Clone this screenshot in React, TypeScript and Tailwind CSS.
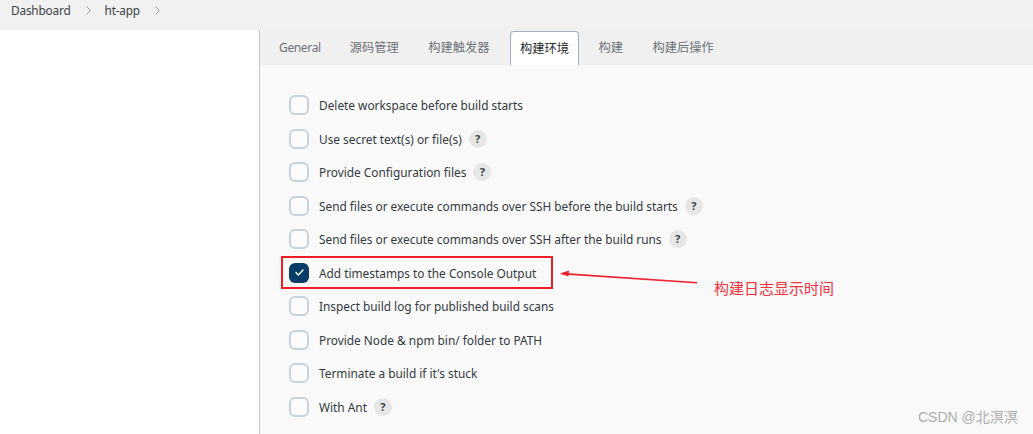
const font = { fontFamily: '"Noto Sans", "Noto Sans CJK SC", sans-serif' };

const rows: { label: string; help?: boolean; checked?: boolean }[] = [
  { label: "Delete workspace before build starts" },
  { label: "Use secret text(s) or file(s)", help: true },
  { label: "Provide Configuration files", help: true },
  { label: "Send files or execute commands over SSH before the build starts", help: true },
  { label: "Send files or execute commands over SSH after the build runs", help: true },
  { label: "Add timestamps to the Console Output", checked: true },
  { label: "Inspect build log for published build scans" },
  { label: "Provide Node & npm bin/ folder to PATH" },
  { label: "Terminate a build if it's stuck" },
  { label: "With Ant", help: true },
];

const tabs = ["General", "源码管理", "构建触发器", "构建环境", "构建", "构建后操作"];

function Chevron() {
  return (
    <svg width="5" height="9" viewBox="0 0 5 9" fill="none" stroke="#a0a0a0" strokeWidth="1" className="block">
      <path d="M0.5 0.5 L4.5 4.5 L0.5 8.5" />
    </svg>
  );
}

export default function App() {
  return (
    <div className="relative w-[1033px] h-[434px] overflow-hidden bg-[#f9f9f9] text-[11.85px] text-[#333a42]" style={font}>
      <header className="h-[30px] bg-[#f1f1f1] flex items-center pl-[11px] pb-[9px] text-[#3c4148] text-[11.85px] tracking-[-0.2px]">
        <span className="pt-[1px]">Dashboard</span>
        <span className="ml-[15px]"><Chevron /></span>
        <span className="ml-[14px] pt-[1px]">ht-app</span>
        <span className="ml-[15px]"><Chevron /></span>
      </header>
      <div className="flex h-[404px]">
        <aside className="w-[259px] shrink-0 bg-white border-r border-[#c4c4c4] box-content" />
        <main className="flex-1 min-w-0">
          <nav className="h-[35px] bg-[#f0f0f0] flex items-end pl-[9px]">
            {tabs.map((t, i) => (
              <div
                key={t}
                className={
                  i === 3
                    ? "h-[34px] px-[9px] pt-[1px] mr-[9.5px] flex items-center text-[12.25px] bg-[#ffffff] border border-b-0 border-[#9fb0bb] rounded-t-[4px] text-[#23272c]"
                    : i === 0
                    ? "h-[34px] px-[10px] mr-[9px] flex items-center text-[12px] tracking-[-0.35px] text-[#6d7278]"
                    : i === 2
                    ? "h-[34px] px-[10px] pt-[1px] mr-[10.5px] flex items-center text-[12.25px] text-[#6d7278]"
                    : "h-[34px] px-[10px] pt-[1px] mr-[9.5px] flex items-center text-[12.25px] text-[#6d7278]"
                }
              >
                {t}
              </div>
            ))}
          </nav>
          <div className="pt-[23.5px] pl-[29px] flex flex-col">
            {rows.map((r) => (
              <div key={r.label} className="h-[33.5px] flex items-center">
                {r.checked ? (
                  <span className="w-[20px] h-[20px] rounded-[6px] bg-[#063d66] flex items-center justify-center">
                    <svg width="9" height="7" viewBox="0 0 9 7" fill="none" stroke="#ffffff" strokeWidth="1.4" strokeLinecap="round" strokeLinejoin="round">
                      <path d="M1 3.6 L3.3 5.9 L8 1" />
                    </svg>
                  </span>
                ) : (
                  <span className="w-[20px] h-[20px] rounded-[6px] border-2 border-[#c8d2da] bg-[#fbfbfb]" />
                )}
                <span className="ml-[10px] pt-[1.6px]">{r.label}</span>
                {r.help && (
                  <span className="ml-[7px] w-[18px] h-[18px] rounded-full bg-[#e6e6e6] flex items-center justify-center text-[11px] font-bold text-[#3a3f45]">
                    ?
                  </span>
                )}
              </div>
            ))}
          </div>
        </main>
      </div>

      <div className="absolute left-[281px] top-[256px] w-[272px] h-[33px] border-2 border-[#ee1c25]" />
      <svg className="absolute left-[558px] top-[268px]" width="142" height="18" viewBox="0 0 142 18" fill="none">
        <path d="M4 5.6 L139 14.8" stroke="#ee2030" strokeWidth="1.6" />
        <path d="M2 5.5 L11 2.4 L10.4 8.4 Z" fill="#ee2030" />
      </svg>
      <span className="absolute left-[714px] top-[279px] text-[15px] leading-[19px] text-[#f0323f]">构建日志显示时间</span>
      <span className="absolute left-[918px] top-[408px] text-[14px] leading-[18px] text-[#adadad]" style={{ fontFamily: '"Liberation Sans", "Noto Sans CJK SC", sans-serif' }}>CSDN @北溟溟</span>
    </div>
  );
}
